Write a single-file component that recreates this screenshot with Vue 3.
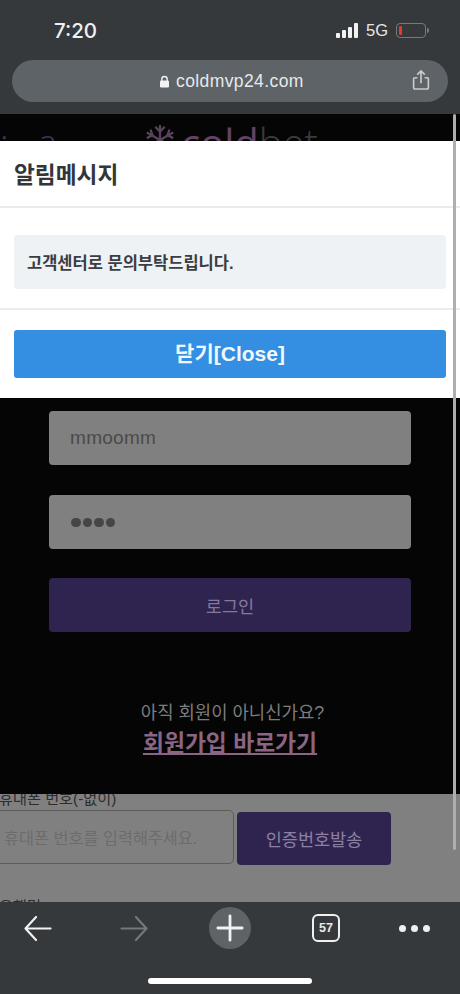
<template>
  <div class="phone">
    <header class="browser-top">
      <div class="status">
        <span class="time">7:20</span>
        <div class="status-right">
          <div class="signal"><i></i><i></i><i></i><i></i></div>
          <span class="net">5G</span>
          <div class="battery"><b></b></div>
          <span class="battery-cap"></span>
        </div>
      </div>
      <div class="url-bar">
        <div class="url">
          <svg width="11" height="13" viewBox="0 0 11 13">
            <path d="M2.8 6V4.2a2.7 2.7 0 0 1 5.4 0V6" fill="none" stroke="#f2f2f2" stroke-width="1.4" />
            <rect x="1" y="5.5" width="9" height="7" rx="1.3" fill="#f2f2f2" />
          </svg>
          <span>coldmvp24.com</span>
        </div>
        <svg class="share" width="18" height="22" viewBox="0 0 20 24" fill="none" stroke="#c9cccd" stroke-width="1.8">
          <path d="M6 9.5H3.2A1.4 1.4 0 0 0 1.8 11v9.6A1.4 1.4 0 0 0 3.2 22h13.6a1.4 1.4 0 0 0 1.4-1.4V11a1.4 1.4 0 0 0-1.4-1.5H14" />
          <path d="M10 15.5V2M5.8 6 10 1.8 14.2 6" />
        </svg>
      </div>
    </header>

    <main class="page">
      <section class="login">
        <div class="logo-row">
          <span class="logo-side">: a</span>
          <svg class="flake" width="32" height="32" viewBox="0 0 34 34" stroke="#59435c" stroke-width="2.4" fill="none">
            <path d="M17 1v32M3 9l28 16M31 9 3 25" />
            <path d="m12 3 5 5 5-5M12 31l5-5 5 5M3 15l6-3-2-6M31 15l-6-3 2-6M3 19l6 3-2 6M31 19l-6 3 2 6" />
          </svg>
          <span class="logo-text">cold<em>bet</em></span>
        </div>
        <div class="form">
          <div class="field">mmoomm</div>
          <div class="field dots"><i></i><i></i><i></i><i></i></div>
          <div class="login-btn">로그인</div>
        </div>
        <p class="ask">아직 회원이 아니신가요?</p>
        <a class="join">회원가입 바로가기</a>
      </section>

      <section class="signup">
        <div class="label">휴대폰 번호(-없이)</div>
        <div class="phone-row">
          <div class="phone-input">휴대폰 번호를 입력해주세요.</div>
          <div class="send-btn">인증번호발송</div>
        </div>
        <div class="label bank">은행명</div>
      </section>

      <div class="modal">
        <h2>알림메시지</h2>
        <div class="modal-body">
          <div class="alert">고객센터로 문의부탁드립니다.</div>
        </div>
        <div class="modal-foot">
          <button class="close">닫기[Close]</button>
        </div>
      </div>

      <div class="scrollbar"></div>
    </main>

    <footer class="browser-bottom">
      <div class="tools">
        <div class="tool">
          <svg width="30" height="27" viewBox="0 0 30 28" fill="none" stroke="#f2f2f2" stroke-width="2.2" stroke-linecap="round" stroke-linejoin="round">
            <path d="M28 14H2M13 2 2 14l11 12" />
          </svg>
        </div>
        <div class="tool">
          <svg width="30" height="27" viewBox="0 0 30 28" fill="none" stroke="#75787a" stroke-width="2.2" stroke-linecap="round" stroke-linejoin="round">
            <path d="M2 14h26M17 2l11 12-11 12" />
          </svg>
        </div>
        <div class="tool">
          <div class="plus">
            <svg width="28" height="28" viewBox="0 0 30 30" stroke="#f2f2f2" stroke-width="3" stroke-linecap="round">
              <path d="M15 2v26M2 15h26" />
            </svg>
          </div>
        </div>
        <div class="tool">
          <div class="tabs">{{ tabCount }}</div>
        </div>
        <div class="more"><i></i><i></i><i></i></div>
      </div>
      <div class="home-bar"></div>
    </footer>
  </div>
</template>

<script setup>
const tabCount = 57
</script>

<style>
html, body { margin: 0; background: #36393c; }
</style>

<style scoped>
.phone {
  width: 460px; height: 994px;
  display: flex; flex-direction: column;
  overflow: hidden;
  font-family: "Liberation Sans", "Noto Sans CJK KR", sans-serif;
}
.browser-top { height: 114px; flex: none; background: #36393c; }
.status {
  height: 60px; padding: 0 31px 0 54px; box-sizing: border-box;
  display: flex; justify-content: space-between; align-items: center;
}
.time { color: #f0f0f0; font-size: 20.5px; font-family: Inter, sans-serif; font-weight: 500; }
.status-right { display: flex; align-items: center; }
.signal { display: flex; align-items: flex-end; gap: 2px; height: 15px; margin-right: 8px; }
.signal i { width: 4px; background: #f2f2f2; border-radius: 1px; }
.signal i:nth-child(1) { height: 5px; }
.signal i:nth-child(2) { height: 8px; }
.signal i:nth-child(3) { height: 11px; }
.signal i:nth-child(4) { height: 15px; }
.net { color: #e6e6e6; font-size: 16.5px; margin-right: 8px; }
.battery {
  width: 30px; height: 15px; box-sizing: border-box;
  border: 1px solid #77797b; border-radius: 4px; padding: 2px;
  display: flex;
}
.battery b { width: 3px; background: #e03c33; border-radius: 1px; }
.battery-cap { width: 2px; height: 5px; background: #77797b; margin-left: 1px; border-radius: 0 2px 2px 0; }
.url-bar {
  height: 42px; margin: 0 12px; padding: 0 18px 0 0; box-sizing: border-box;
  background: #5e6367; border-radius: 21px;
  display: flex; align-items: center; justify-content: flex-end;
  position: relative;
}
.url {
  position: absolute; left: 147px; top: 0; height: 42px;
  display: flex; align-items: center; gap: 6px;
  color: #e8e9e9; font-size: 17.5px; letter-spacing: 0.4px;
}
.share { margin-top: -3px; }

.page { flex: 1; position: relative; overflow: hidden; background: #808080; }
.login { height: 680px; background: #050505; display: flex; flex-direction: column; align-items: center; }
.logo-row { height: 297px; width: 100%; display: flex; align-items: flex-start; box-sizing: border-box; padding-top: 10px; }
.logo-side { color: #43345a; font-size: 36px; line-height: 30px; width: 144px; white-space: pre; word-spacing: 20px; margin-top: 4px; font-family: "Open Sans", sans-serif; font-weight: 300; }
.flake { flex: none; }
.logo-text { color: #624364; font-size: 40px; line-height: 34px; margin-left: 5px; margin-top: 2px; font-family: "Open Sans", sans-serif; font-weight: 400; }
.logo-text em { font-style: normal; color: #3c3c3c; font-weight: 300; }
.form { width: 362px; display: flex; flex-direction: column; gap: 29.5px; }
.field {
  height: 54px; box-sizing: border-box; padding: 0 21px;
  background: #808080; border-radius: 4px;
  display: flex; align-items: center;
  color: #4a4a4a; font-size: 19px; letter-spacing: 0.3px;
}
.dots { gap: 2px; padding: 2px 0 0 22px; }
.dots i { width: 9.5px; height: 9.5px; border-radius: 50%; background: #454545; }
.login-btn {
  height: 54px; background: #2f2450; border-radius: 4px;
  display: flex; align-items: center; justify-content: center;
  color: #85799b; font-size: 17.5px;
}
.ask { margin: 69px 0 0 5px; color: #7d7d7d; font-size: 17.8px; line-height: 24px; }
.join {
  margin-top: 3px; color: #8a6684; font-size: 22.8px; line-height: 30px;
  font-weight: 700; text-decoration: underline; text-underline-offset: 2px;
}

.signup { height: 108px; overflow: hidden; }
.label { color: #2c2c2c; font-size: 15.2px; line-height: 20px; margin-top: -5px; white-space: nowrap; margin-left: -1px; }
.phone-row { display: flex; align-items: flex-start; gap: 3px; margin-top: 1px; margin-left: -4px; }
.phone-input {
  width: 238px; height: 54px; box-sizing: border-box; padding-left: 7px;
  border: 1px solid #5c5c5c; border-radius: 5px;
  display: flex; align-items: center;
  color: #6c6c6c; font-size: 16.3px; white-space: nowrap;
}
.send-btn {
  width: 154px; height: 53px; margin-top: 2px;
  background: #2f2450; border-radius: 4px;
  display: flex; align-items: center; justify-content: center;
  color: #8c80a3; font-size: 17.5px;
}
.label.bank { margin-top: 32px; }

.modal {
  position: absolute; left: 0; right: 0; top: 27px;
  height: 257px; background: #fff;
  display: flex; flex-direction: column;
}
.modal h2 {
  margin: 0; height: 67px; box-sizing: border-box; padding-left: 14px;
  display: flex; align-items: center;
  font-size: 22.7px; font-weight: 700; color: #333639;
  border-bottom: 2px solid #e9ebec;
}
.modal-body { height: 102px; box-sizing: border-box; padding: 27px 14px 0; border-bottom: 2px solid #e9ebec; }
.alert {
  height: 54px; box-sizing: border-box; padding-left: 13px;
  background: #eff2f4; border-radius: 4px;
  display: flex; align-items: center;
  color: #3a3d41; font-size: 16.5px; font-weight: 700;
}
.modal-foot { padding: 20px 14px 0; }
.close {
  display: block; width: 100%; height: 48px; padding: 0 0 4px;
  border: 0; border-radius: 3px; background: #348ee2; color: #f0f7fd;
  font: 700 21px "Liberation Sans", "Noto Sans CJK KR", sans-serif;
}
.scrollbar {
  position: absolute; left: 453px; top: 0; width: 3px; height: 736px;
  background: #aeaeae; border-radius: 2px;
}

.browser-bottom { height: 92px; flex: none; background: #36393c; }
.tools {
  height: 52px; margin-left: -10px;
  display: flex; align-items: center;
}
.tool { width: 96px; display: flex; justify-content: center; }
.plus {
  width: 42px; height: 42px;
  border-radius: 50%; background: #5e6367;
  display: flex; align-items: center; justify-content: center;
}
.tabs {
  width: 28px; height: 28px; box-sizing: border-box;
  border: 2.5px solid #f0f0f0; border-radius: 6px;
  display: flex; align-items: center; justify-content: center;
  color: #e8e8e8; font-size: 12.5px; font-weight: 700;
}
.more { display: flex; gap: 5px; margin-left: 25px; }
.more i { width: 7px; height: 7px; border-radius: 50%; background: #f0f0f0; }
.home-bar { width: 164px; height: 6px; margin: 24px auto 0; background: #fff; border-radius: 3px; }
</style>
